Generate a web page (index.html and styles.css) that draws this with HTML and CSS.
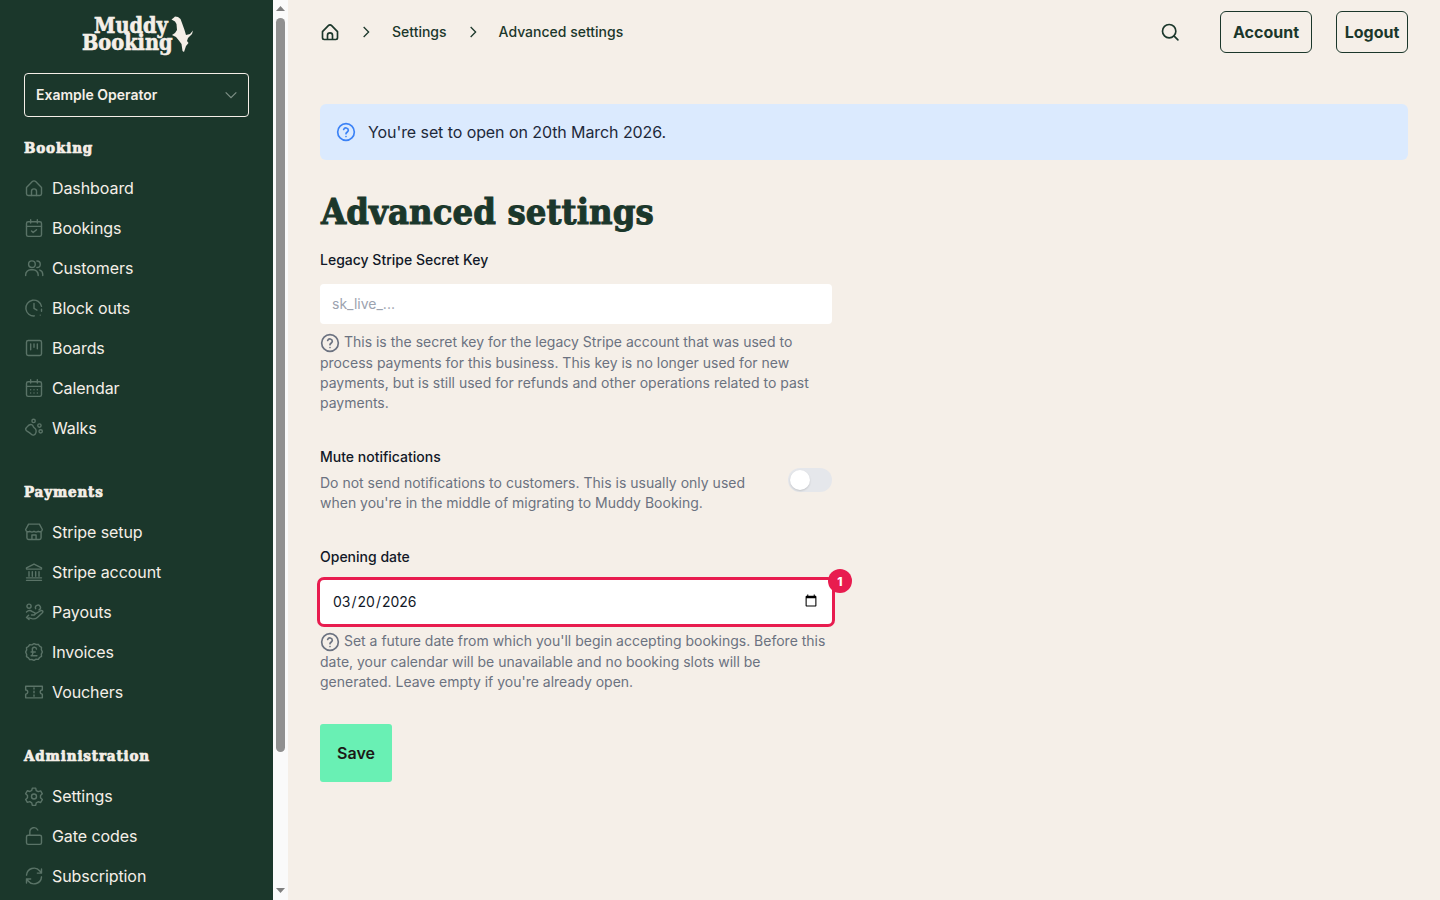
FILE: index.html
```html
<!DOCTYPE html>
<html lang="en">
<head>
<meta charset="utf-8">
<title>Advanced settings</title>
<link rel="stylesheet" href="styles.css">
</head>
<body>
<aside class="sidebar">
  <div class="logo">
    <span class="logo-top">Muddy</span>
    <span class="logo-bottom">Booking</span>
    <svg class="logo-dog" viewBox="170 15 25 40"><path d="M171.500 19.500L174 17.500 175 16.500 178 17 180.500 19 182 23 184.500 30 186 35 190 34 193 30.500 192 34 188 38 187 41 188.500 43 186 46 184 52 182.500 51 181.500 44 178.500 40 176 37 172 35 175 33 177 30 176.500 24 175 21.500Z"/></svg>
  </div>
  <div class="operator"><span class="operator-name">Example Operator</span>
    <svg class="chev" viewBox="0 0 24 24"><path d="M4 8l8 8 8-8"/></svg>
  </div>

  <h2 class="nav-title first">Booking</h2>
  <nav class="nav">
    <a class="nav-item"><svg viewBox="0 0 24 24"><path d="M3 11.500l7-7.200a2.800 2.800 0 0 1 4 0l7 7.200V19a2 2 0 0 1-2 2H5a2 2 0 0 1-2-2z"/><path d="M9 21v-5a3 3 0 0 1 6 0v5"/></svg>Dashboard</a>
    <a class="nav-item"><svg viewBox="0 0 24 24"><rect x="3" y="4.500" width="18" height="17.500" rx="2"/><path d="M8 2v4M16 2v4M3 10h18M9 15.500l2 2 4-3.500"/></svg>Bookings</a>
    <a class="nav-item"><svg viewBox="0 0 24 24"><circle cx="9.500" cy="7.500" r="4"/><path d="M2 21v-1a6 6 0 0 1 6-6h3a6 6 0 0 1 6 6v1M15.500 3.500a4 4 0 0 1 0 8M19 14.500a5.500 5.500 0 0 1 3.500 5V21"/></svg>Customers</a>
    <a class="nav-item"><svg viewBox="0 0 24 24"><path d="M21 10A9.500 9.500 0 1 0 12.500 21.500M12 6.500v6l3.500 2M21 13.500v2.500M19.500 20.500h.01"/></svg>Block outs</a>
    <a class="nav-item"><svg viewBox="0 0 24 24"><rect x="3" y="3" width="18" height="18" rx="2"/><path d="M8 7v7M12 7v4M16 7v6"/></svg>Boards</a>
    <a class="nav-item"><svg viewBox="0 0 24 24"><rect x="3" y="4.500" width="18" height="17.500" rx="2"/><path d="M8 2v4M16 2v4M3 10h18M8 14h.01M12 14h.01M16 14h.01M8 18h.01M12 18h.01M16 18h.01"/></svg>Calendar</a>
    <a class="nav-item"><svg viewBox="0 0 24 24"><circle cx="11.500" cy="3.500" r="2"/><circle cx="18.500" cy="9" r="2"/><circle cx="20" cy="16" r="2"/><path d="M6 8.500c2-1.500 4.500-.5 5 1.500.4 1.600 2 2 3 3.500 1.200 2 .5 6.500-2.500 7-2 .3-3-1.500-5-3-2-1.300-4.500-2-4.500-4 0-2 2.500-3.500 4-5z"/></svg>Walks</a>
  </nav>

  <h2 class="nav-title">Payments</h2>
  <nav class="nav">
    <a class="nav-item"><svg viewBox="0 0 24 24"><path d="M5.500 2.500h13L22 9a3 3 0 0 1-5 2 3.500 3.500 0 0 1-5 0 3.500 3.500 0 0 1-5 0 3 3 0 0 1-5-2zM3.500 12V19a2 2 0 0 0 2 2h13a2 2 0 0 0 2-2v-7M9.500 21v-5.500h5V21"/></svg>Stripe setup</a>
    <a class="nav-item"><svg viewBox="0 0 24 24"><path d="M12 2.500L3 7v1.500h18V7zM3 22h18M3 19h18M6 11.500V17M10 11.500V17M14 11.500V17M18 11.500V17"/></svg>Stripe account</a>
    <a class="nav-item"><svg viewBox="0 0 24 24"><circle cx="6" cy="5" r="2.500"/><path d="M3 12c2-2 5-2 7-.5l3 1.500a1.500 1.500 0 0 1-1.500 2.500H9M13 14.500l7-4c2-1 3.500 1 2 2.500l-6 5.500c-2 1.800-4 2-6.500 1.500L6 19M5.500 16L3 18.500l3 2.500M14 8a3 3 0 1 1 4 1.500"/></svg>Payouts</a>
    <a class="nav-item"><svg viewBox="0 0 24 24"><path d="M12 2l2.500 1 2.700-.2 1.500 2.200 2.300 1.400-.2 2.700 1.200 2.900-1.200 2.500.2 2.700-2.300 1.400-1.500 2.200-2.700-.2L12 22l-2.500-1-2.700.2-1.500-2.200L3 17.600l.2-2.700L2 12l1.200-2.500L3 6.800 5.300 5.400l1.500-2.200 2.700.2z"/><path d="M15 8.500a2.500 2.500 0 0 0-5 .5c0 2 1 3 .5 5s-1.500 2.500-2 2.500H15.500M8.500 12h5"/></svg>Invoices</a>
    <a class="nav-item"><svg viewBox="0 0 24 24"><path d="M2 5h20v4.500a2.500 2.500 0 0 0 0 5V19H2v-4.500a2.500 2.500 0 0 0 0-5zM12 7v1.500M12 11v2M12 15.500V17"/></svg>Vouchers</a>
  </nav>

  <h2 class="nav-title">Administration</h2>
  <nav class="nav">
    <a class="nav-item"><svg viewBox="0 0 24 24"><path d="M10 2.500h4l.7 3 2.300 1.300 3-.9 2 3.500-2.200 2.100v2.700l2.200 2.100-2 3.500-3-.9-2.300 1.300-.7 3h-4l-.7-3L7 18.700l-3 .9-2-3.500 2.200-2.100v-2.700L2 9.200l2-3.500 3 .9 2.300-1.300z"/><circle cx="12" cy="12.500" r="3"/></svg>Settings</a>
    <a class="nav-item"><svg viewBox="0 0 24 24"><rect x="3" y="11" width="18" height="11" rx="2"/><path d="M7 11V7a5 5 0 0 1 9.500-2.200"/></svg>Gate codes</a>
    <a class="nav-item"><svg viewBox="0 0 24 24"><path d="M3 11a9 9 0 0 1 16-5l2 2.500M21 3.500v5h-5M21 13a9 9 0 0 1-16 5l-2-2.500M3 20.500v-5h5"/></svg>Subscription</a>
  </nav>
</aside>

<div class="scrollbar">
  <svg class="scroll-arrow" viewBox="0 0 15 15"><path d="M7.500 6L12 11H3z"/></svg>
  <div class="scroll-track"><div class="scroll-thumb"></div></div>
  <svg class="scroll-arrow" viewBox="0 0 15 15"><path d="M3 3h9L7.500 8z"/></svg>
</div>

<main class="main">
  <header class="topbar">
    <ol class="crumbs">
      <li><svg class="crumb-home" viewBox="0 0 24 24"><path d="M3 11.500l7-7.200a2.800 2.800 0 0 1 4 0l7 7.200V19a2 2 0 0 1-2 2H5a2 2 0 0 1-2-2z"/><path d="M9 21v-5a3 3 0 0 1 6 0v5"/></svg></li>
      <li><svg class="crumb-sep" viewBox="0 0 24 24"><path d="M8 3.500l8.500 8.500L8 20.500"/></svg></li>
      <li class="crumb-text">Settings</li>
      <li><svg class="crumb-sep" viewBox="0 0 24 24"><path d="M8 3.500l8.500 8.500L8 20.500"/></svg></li>
      <li class="crumb-text">Advanced settings</li>
    </ol>
    <svg class="search" viewBox="0 0 24 24"><circle cx="11" cy="11" r="8"/><path d="M17 17l4.500 4.500"/></svg>
    <a class="btn-outline account">Account</a>
    <a class="btn-outline logout">Logout</a>
  </header>

  <div class="alert">
    <svg class="alert-icon" viewBox="0 0 24 24"><circle cx="12" cy="12" r="10"/><path d="M9.200 9a2.900 2.900 0 0 1 5.600 1c0 2-2.800 2.500-2.800 4M12 17.500h.01"/></svg>
    <span>You're set to open on 20th March 2026.</span>
  </div>

  <h1 class="title">Advanced settings</h1>

  <form class="form">
    <label class="label label-key" for="key">Legacy Stripe Secret Key</label>
    <input class="input" id="key" type="text" placeholder="sk_live_...">
    <p class="help"><svg class="help-icon" viewBox="0 0 24 24"><circle cx="12" cy="12" r="10"/><path d="M9.200 9a2.900 2.900 0 0 1 5.600 1c0 2-2.800 2.500-2.800 4M12 17.500h.01"/></svg> This is the secret key for the legacy Stripe account that was used to process payments for this business. This key is no longer used for new payments, but is still used for refunds and other operations related to past payments.</p>

    <div class="toggle-row">
      <div class="toggle-text">
        <div class="label">Mute notifications</div>
        <p class="toggle-desc">Do not send notifications to customers. This is usually only used when you're in the middle of migrating to Muddy Booking.</p>
      </div>
      <span class="toggle"><span class="knob"></span></span>
    </div>

    <label class="label label-date" for="date">Opening date</label>
    <div class="date-wrap">
      <input class="date" id="date" type="date" value="2026-03-20">
      <span class="badge">1</span>
    </div>
    <p class="help help-date"><svg class="help-icon" viewBox="0 0 24 24"><circle cx="12" cy="12" r="10"/><path d="M9.200 9a2.900 2.900 0 0 1 5.600 1c0 2-2.800 2.500-2.800 4M12 17.500h.01"/></svg> Set a future date from which you'll begin accepting bookings. Before this date, your calendar will be unavailable and no booking slots will be generated. Leave empty if you're already open.</p>

    <button class="save" type="button">Save</button>
  </form>
</main>
</body>
</html>
```

FILE: styles.css
```css
* { box-sizing: border-box; }
html, body { height: 100%; }
body {
  margin: 0;
  display: flex;
  height: 100vh;
  overflow: hidden;
  background: #f5efe8;
  color: #1b372b;
  font-family: Inter, "Liberation Sans", sans-serif;
  font-size: 16px;
}

/* Sidebar */
.sidebar {
  flex: 0 0 273px;
  width: 273px;
  height: 100vh;
  overflow: hidden;
  background: #1b372b;
  color: #f5efe8;
  padding: 14px 24px 0;
}

/* Drawn scrollbar beside the sidebar */
.scrollbar {
  flex: 0 0 15px;
  width: 15px;
  height: 100vh;
  display: flex;
  flex-direction: column;
  background: #fafafa;
}
.scroll-arrow { flex: none; display: block; width: 15px; height: 15px; fill: #7f7f7f; }
.scroll-track { flex: 1; padding: 3px 3px 0; }
.scroll-thumb { width: 9px; height: 734px; border-radius: 5px; background: #909090; }

.logo {
  position: relative;
  height: 38px;
  font-family: "DejaVu Serif Condensed", "DejaVu Serif", serif;
  font-weight: 700;
  line-height: 17px;
  font-size: 21.5px;
  -webkit-text-stroke: 0.6px #f5efe8;
  color: #f5efe8;
}
.logo-top { display: block; padding-left: 70px; padding-top: 3px; }
.logo-bottom { display: block; padding-left: 58px; }
.logo-dog { position: absolute; left: 146px; top: 1px; width: 25px; height: 40px; fill: #f5efe8; }
.operator {
  margin-top: 21px;
  width: 225px;
  height: 44px;
  border: 1px solid #f5efe8;
  border-radius: 4px;
  display: flex;
  align-items: center;
  justify-content: space-between;
  padding: 0 9px 0 11px;
  font-size: 14px;
  font-weight: 600;
}
.operator-name { margin-top: -2px; }
.chev { width: 16px; height: 16px; fill: none; stroke: #7d8f86; stroke-width: 1.8; }
.nav-title {
  margin: 34px 0 0;
  height: 20px;
  font-family: "DejaVu Serif Condensed", "DejaVu Serif", serif;
  font-size: 15px;
  line-height: 20px;
  font-weight: 700;
  letter-spacing: 0.85px;
  -webkit-text-stroke: 0.7px #f5efe8;
}
.nav-title.first { margin-top: 21px; }
.nav { margin-top: 10px; display: flex; flex-direction: column; }
.nav-item {
  height: 40px;
  display: flex;
  align-items: center;
  gap: 8px;
  font-size: 16px;
  letter-spacing: -0.08px;
}
.nav-item svg {
  width: 20px;
  height: 20px;
  flex: none;
  fill: none;
  stroke: #5a7367;
  stroke-width: 1.7;
  stroke-linecap: round;
  stroke-linejoin: round;
}

/* Main */
.main { flex: 1; min-width: 0; padding: 11px 32px 0; }
.topbar { display: flex; align-items: center; height: 42px; }
.crumbs {
  list-style: none;
  margin: 0 auto 0 0;
  padding: 0;
  display: flex;
  align-items: center;
  font-size: 14px;
  font-weight: 500;
}
.crumbs li { display: flex; }
.crumb-home { width: 20px; height: 20px; fill: none; stroke: #1b372b; stroke-width: 2; stroke-linejoin: round; }
.crumb-sep { width: 14px; height: 14px; margin: 0 19px; fill: none; stroke: #1b372b; stroke-width: 2.2; }
.crumb-text { color: #1b372b; margin-top: -2px; }
.search { width: 20px; height: 20px; margin-right: 40px; fill: none; stroke: #1b372b; stroke-width: 2; stroke-linecap: round; }
.btn-outline {
  height: 42px;
  display: flex;
  align-items: center;
  justify-content: center;
  border: 1px solid #1b372b;
  border-radius: 6px;
  font-weight: 700;
  font-size: 16px;
}
.account { width: 92px; margin-right: 24px; }
.logout { width: 72px; }

.alert {
  margin-top: 51px;
  height: 56px;
  background: #dbeafe;
  border-radius: 6px;
  display: flex;
  align-items: center;
  gap: 12px;
  padding: 0 16px;
  color: #1e293b;
  letter-spacing: -0.08px;
}
.alert-icon { width: 20px; height: 20px; fill: none; stroke: #3b82f6; stroke-width: 2; stroke-linecap: round; }
.title {
  margin: 31px 0 0 1px;
  font-family: "DejaVu Serif Condensed", "DejaVu Serif", serif;
  font-size: 36px;
  line-height: 40px;
  font-weight: 700;
  letter-spacing: 0.12px;
  color: #1b372b;
  -webkit-text-stroke: 1px #1b372b;
}

/* Form */
.form { width: 512px; }
.label { display: block; font-size: 14px; line-height: 20px; font-weight: 500; color: #111827; }
.label-key { margin-top: 19px; }
.input {
  display: block;
  margin-top: 14px;
  width: 100%;
  height: 40px;
  background: #fff;
  border: 0;
  border-radius: 4px;
  padding: 0 12px 2px;
  font: 14px Inter, sans-serif;
  color: #111827;
}
.input::placeholder { color: #9ca3af; opacity: 1; }
.help { margin: 8px 0 0; font-size: 14px; line-height: 20px; color: #6b7280; }
.help-icon { width: 20px; height: 20px; vertical-align: middle; fill: none; stroke: #6b7280; stroke-width: 2; stroke-linecap: round; }
.toggle-row { margin-top: 34px; display: flex; align-items: center; justify-content: space-between; }
.toggle-text { width: 440px; }
.toggle-desc { margin: 6px 0 0; font-size: 14px; line-height: 20px; color: #6b7280; }
.toggle { width: 44px; height: 24px; border-radius: 12px; background: #e5e7eb; padding: 2px; display: block; margin-top: -1px; }
.knob { display: block; width: 20px; height: 20px; border-radius: 50%; background: #fff; box-shadow: 0 1px 2px rgba(0,0,0,.15); }
.label-date { margin-top: 34px; }
.date-wrap { position: relative; margin-top: 13px; }
.date {
  display: block;
  width: 100%;
  height: 44px;
  background: #fff;
  border: 0;
  border-radius: 4px;
  outline: 3px solid #e81c4f;
  outline-offset: 0;
  padding: 0 12px 2px 12px;
  font: 14px Inter, sans-serif;
  color: #111827;
}
.badge {
  position: absolute;
  right: -20px;
  top: -11px;
  width: 24px;
  height: 24px;
  border-radius: 50%;
  background: #e81c4f;
  color: #fff;
  font-size: 12px;
  font-weight: 800;
  display: flex;
  align-items: center;
  justify-content: center;
}
.help-date { margin-top: 7px; }
.save {
  display: block;
  margin-top: 32px;
  width: 72px;
  height: 58px;
  background: #69f0b4;
  border: 0;
  border-radius: 3px;
  font: 600 16px Inter, sans-serif;
  color: #1c1917;
  padding: 0;
}
```
